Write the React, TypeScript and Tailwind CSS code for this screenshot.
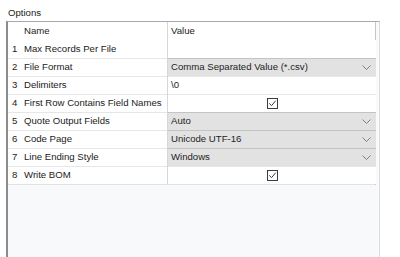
import { ReactNode } from 'react'

type Row = {
  num: number
  name: string
  kind: 'text' | 'combo' | 'check' | 'empty'
  value?: string
}

const rows: Row[] = [
  { num: 1, name: 'Max Records Per File', kind: 'empty' },
  { num: 2, name: 'File Format', kind: 'combo', value: 'Comma Separated Value (*.csv)' },
  { num: 3, name: 'Delimiters', kind: 'text', value: '\\0' },
  { num: 4, name: 'First Row Contains Field Names', kind: 'check' },
  { num: 5, name: 'Quote Output Fields', kind: 'combo', value: 'Auto' },
  { num: 6, name: 'Code Page', kind: 'combo', value: 'Unicode UTF-16' },
  { num: 7, name: 'Line Ending Style', kind: 'combo', value: 'Windows' },
  { num: 8, name: 'Write BOM', kind: 'check' },
]

const Chevron = () => (
  <svg width="9" height="6" viewBox="0 0 9 6" className="shrink-0">
    <path d="M0.5 0.5 L4.5 4.5 L8.5 0.5" fill="none" stroke="#808080" strokeWidth="1" />
  </svg>
)

const CheckBox = () => (
  <svg width="11" height="11" viewBox="0 0 11 11">
    <rect x="0.5" y="0.5" width="10" height="10" fill="#fff" stroke="#3c3c3c" strokeWidth="1" />
    <path d="M2.3 5.3 L4.5 7.7 L8.7 2.7" fill="none" stroke="#3c3c3c" strokeWidth="1" />
  </svg>
)

const ValueCell = ({ row, first }: { row: Row; first: boolean }): ReactNode => {
  const edge = first ? '' : 'border-t border-[#e6e6e6]'
  if (row.kind === 'combo') {
    return (
      <div className="flex h-full items-center justify-between bg-[#e2e2e2] border-t border-[#c4c4c4] pl-[3px] pr-[5px]">
        <span>{row.value}</span>
        <Chevron />
      </div>
    )
  }
  if (row.kind === 'check') {
    return (
      <div className={`flex h-full items-center justify-center bg-white ${edge}`}>
        <CheckBox />
      </div>
    )
  }
  return <div className={`flex h-full items-center bg-white pl-[3px] ${edge}`}>{row.value}</div>
}

export default function App() {
  return (
    <div
      className="w-[400px] h-[257px] overflow-hidden bg-white text-[9.6px] text-[#222]"
      style={{ fontFamily: '"Liberation Sans", Arial, sans-serif' }}
    >
      <div className="h-[21px] pl-[8px] pt-[7px] leading-[11px]">Options</div>
      <div className="ml-[6px] w-[374px] h-[236px] border-l-2 border-t border-r border-l-[#8c8c8c] border-t-[#a9a9a9] border-r-[#dcdcdc] bg-[#f8f9fb]">
        <div className="w-[368px] border-r border-[#c6c6c6] bg-white">
          <div className="grid grid-cols-[159px_1px_208px] h-[18px]">
            <div className="flex items-center pl-[16px]">Name</div>
            <div className="bg-[#d6d6d6]" />
            <div className="flex items-center pl-[3px]">Value</div>
          </div>
          {rows.map((row, i) => (
            <div key={row.num} className="grid grid-cols-[159px_1px_208px] h-[18px]">
              <div
                className={`flex items-center whitespace-nowrap ${i === 0 ? '' : 'border-t border-[#e6e6e6]'}`}
              >
                <span className="w-[16px] pl-[4px]">{row.num}</span>
                <span>{row.name}</span>
              </div>
              <div className="bg-[#d6d6d6]" />
              <ValueCell row={row} first={i === 0} />
            </div>
          ))}
          <div className="h-px bg-[#e2e2e2]" />
        </div>
      </div>
    </div>
  )
}
